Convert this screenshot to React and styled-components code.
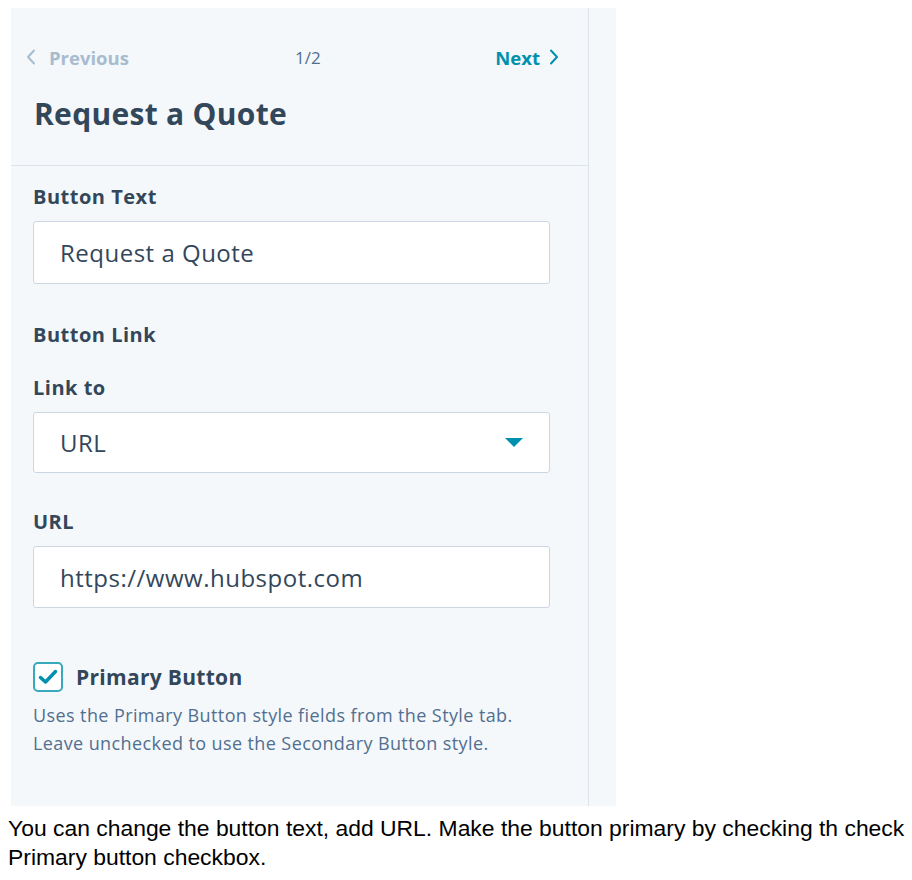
import React from "react";
import styled, { createGlobalStyle } from "styled-components";

const GlobalStyle = createGlobalStyle`
  html, body {
    margin: 0;
    padding: 0;
    background: #ffffff;
  }
  body {
    font-family: "Open Sans", Lato, sans-serif;
    color: #33475b;
  }
`;

const Page = styled.div`
  padding-top: 8px;
`;

const Panel = styled.div`
  display: flex;
  width: 605px;
  height: 798px;
  margin-left: 11px;
  background: #f5f8fa;
`;

const Main = styled.div`
  width: 577px;
  border-right: 1px solid #dfe3eb;
  display: flex;
  flex-direction: column;
`;

const Strip = styled.div`
  flex: 1;
  background: #f5f8fa;
`;

const Header = styled.div`
  padding: 36px 29px 0 15px;
  height: 158px;
  box-sizing: border-box;
  border-bottom: 1px solid #dfe3eb;
`;

const Nav = styled.div`
  display: grid;
  grid-template-columns: 269px auto 1fr;
  align-items: center;
  height: 26px;
  font-size: 18.5px;
  font-weight: 700;
`;

const NavLink = styled.span`
  display: flex;
  align-items: center;
  gap: ${(p) => (p.$active ? 9 : 13)}px;
  color: ${(p) => (p.$active ? "#0091ae" : "#a8bccf")};
  justify-self: ${(p) => (p.$active ? "end" : "start")};
`;

const Counter = styled.span`
  font-weight: 400;
  font-size: 17px;
  color: #516f90;
`;

const Title = styled.h1`
  margin: 24px 0 0 8px;
  font-size: 30px;
  letter-spacing: 0.3px;
  line-height: 40px;
  font-weight: 700;
  color: #33475b;
`;

const Form = styled.div`
  padding: 18px 38px 0 22px;
  display: flex;
  flex-direction: column;
`;

const Label = styled.div`
  font-size: 20px;
  letter-spacing: 0.5px;
  font-weight: 700;
  line-height: 26px;
  color: #33475b;
  margin-top: ${(p) => p.$gap || 0}px;
  margin-bottom: ${(p) => p.$below || 0}px;
`;

const Field = styled.div`
  display: flex;
  align-items: center;
  justify-content: space-between;
  height: ${(p) => p.$h}px;
  box-sizing: border-box;
  background: #ffffff;
  border: 1px solid #cbd6e2;
  border-radius: 3px;
  padding: 0 26px 0 26px;
  font-size: 24px;
  letter-spacing: 0.5px;
  font-weight: 400;
  color: #33475b;
`;

const Check = styled.div`
  display: flex;
  align-items: center;
  gap: 13px;
  margin-top: 54px;
  font-size: 21px;
  letter-spacing: 0.3px;
  font-weight: 700;
  color: #33475b;
`;

const Box = styled.span`
  width: 30px;
  height: 30px;
  box-sizing: border-box;
  border: 2px solid #38a9bd;
  border-radius: 5px;
  background: #ffffff;
  display: flex;
  align-items: center;
  justify-content: center;
`;

const Help = styled.p`
  margin: 9px 0 0 0;
  font-size: 18px;
  letter-spacing: 0.4px;
  line-height: 28px;
  color: #516f90;
`;

const Caption = styled.div`
  margin: 8px 0 0 8px;
  font-family: "Liberation Sans", Arial, sans-serif;
  font-size: 22.9px;
  line-height: 29px;
  color: #000000;
  white-space: nowrap;
  overflow: hidden;
`;

const Chevron = ({ left }) => (
  <svg width="10" height="16" viewBox="0 0 10 16">
    <polyline
      points={left ? "8,1.5 2,8 8,14.5" : "2,1.5 8,8 2,14.5"}
      fill="none"
      stroke="currentColor"
      strokeWidth="2"
      strokeLinecap="round"
      strokeLinejoin="round"
    />
  </svg>
);

export default function App() {
  return (
    <>
      <GlobalStyle />
      <Page>
        <Panel>
          <Main>
            <Header>
              <Nav>
                <NavLink>
                  <Chevron left />
                  Previous
                </NavLink>
                <Counter>1/2</Counter>
                <NavLink $active>
                  Next
                  <Chevron />
                </NavLink>
              </Nav>
              <Title>Request a Quote</Title>
            </Header>
            <Form>
              <Label $below={11}>Button Text</Label>
              <Field $h={63}>Request a Quote</Field>
              <Label $gap={38}>Button Link</Label>
              <Label $gap={27} $below={11}>Link to</Label>
              <Field $h={61}>
                URL
                <svg width="18" height="9" viewBox="0 0 18 9">
                  <polygon points="0,0 18,0 9,9" fill="#0091ae" />
                </svg>
              </Field>
              <Label $gap={36} $below={11}>URL</Label>
              <Field $h={62}>https://www.hubspot.com</Field>
              <Check>
                <Box>
                  <svg width="20" height="16" viewBox="0 0 20 16">
                    <polyline
                      points="2.5,8.5 7.5,13 17.5,2.5"
                      fill="none"
                      stroke="#0091ae"
                      strokeWidth="3.5"
                      strokeLinecap="round"
                      strokeLinejoin="round"
                    />
                  </svg>
                </Box>
                Primary Button
              </Check>
              <Help>
                Uses the Primary Button style fields from the Style tab.
                <br />
                Leave unchecked to use the Secondary Button style.
              </Help>
            </Form>
          </Main>
          <Strip />
        </Panel>
        <Caption>
          You can change the button text, add URL. Make the button primary by checking th check
          <br />
          Primary button checkbox.
        </Caption>
      </Page>
    </>
  );
}
